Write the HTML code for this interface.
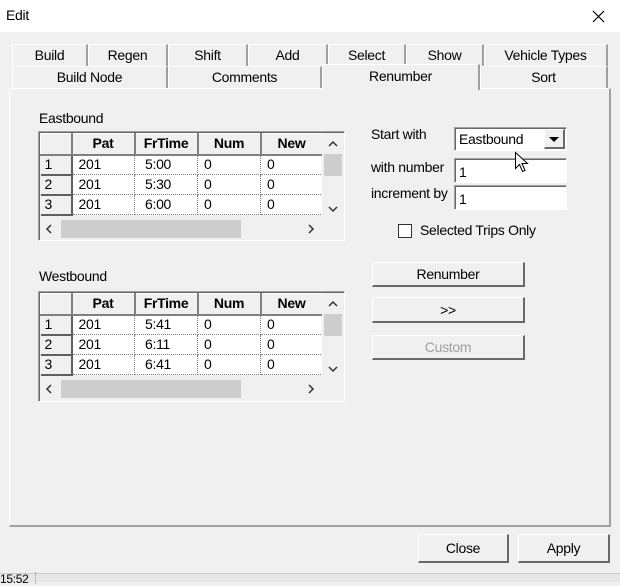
<!DOCTYPE html>
<html><head><style>
*{box-sizing:border-box;margin:0;padding:0}
body{width:620px;height:582px;background:#f0f0f0;font-family:"Liberation Sans",sans-serif;font-size:13px;color:#000;position:relative;overflow:hidden;letter-spacing:-0.3px}
.a{position:absolute}
.title{left:0;top:0;width:620px;height:32px;background:#fff}
.tab{position:absolute;height:22px;border:1px solid #fff;border-right:2px solid #a0a0a0;border-bottom:none;background:#f0f0f0;text-align:center;line-height:21px;font-size:14px}
.panel{left:9px;top:88px;width:602px;height:439px;border:1px solid #fff;border-right:2px solid #a0a0a0;border-bottom:2px solid #a0a0a0}
.grid{position:absolute;border:1px solid #a0a0a0;border-right-color:#fff;border-bottom-color:#fff;background:#f0f0f0;box-shadow:inset 1px 1px 0 #696969}
.btn{position:absolute;border:1px solid #fff;border-right:2px solid #696969;border-bottom:2px solid #696969;background:#f0f0f0;text-align:center;font-size:14px}
.inp{position:absolute;background:#fff;border:1px solid #a0a0a0;border-right-color:#fff;border-bottom-color:#fff;box-shadow:inset 1px 1px 0 #696969;padding-left:4px;font-size:14px}
table{border-collapse:collapse;position:absolute;left:1px;top:1px}
td{height:20px;font-size:14px;padding-left:6px;border-right:1px dotted #808080;border-bottom:1px dotted #808080;background:#fff;line-height:17px}
th{height:21px;font-size:14px;font-weight:bold;background:#f0f0f0;border-right:2px solid #808080;border-bottom:2px solid #808080;border-left:1px solid #fff;border-top:1px solid #fff;line-height:17px}
td.r{background:#f0f0f0;border:none;border-right:2px solid #606060;border-bottom:2px solid #606060;border-top:1px solid #fff;padding-left:4px}
</style></head><body>
<div class="a title"></div>
<div class="a" style="left:6px;top:7px;font-size:14px">Edit</div>
<svg class="a" style="left:592px;top:10px" width="13" height="13"><path d="M1 1L12 12M12 1L1 12" stroke="#000" stroke-width="1.2"/></svg>

<div class="tab" style="left:12px;top:44px;width:76px">Build</div>
<div class="tab" style="left:88px;top:44px;width:80px">Regen</div>
<div class="tab" style="left:168px;top:44px;width:80px">Shift</div>
<div class="tab" style="left:248px;top:44px;width:80px">Add</div>
<div class="tab" style="left:328px;top:44px;width:78px">Select</div>
<div class="tab" style="left:406px;top:44px;width:78px">Show</div>
<div class="tab" style="left:484px;top:44px;width:124px">Vehicle Types</div>
<div class="a panel"></div>
<div class="tab" style="left:12px;top:66px;width:156px">Build Node</div>
<div class="tab" style="left:168px;top:66px;width:154px">Comments</div>
<div class="tab" style="left:322px;top:64px;width:158px;height:26px;line-height:22px;border-right:2px solid #a0a0a0;z-index:2">Renumber</div>
<div class="tab" style="left:480px;top:66px;width:128px">Sort</div>

<div class="a" style="left:39px;top:110px;font-size:14px">Eastbound</div>
<div class="grid" style="left:38px;top:131px;width:307px;height:110px">
<table>
<tr><th style="width:31px"></th><th style="width:63px">Pat</th><th style="width:63px">FrTime</th><th style="width:63px">Num</th><th style="width:62px">New</th></tr>
<tr><td class="r">1</td><td>201</td><td style="padding-left:10px">5:00</td><td>0</td><td>0</td></tr>
<tr><td class="r">2</td><td>201</td><td style="padding-left:10px">5:30</td><td>0</td><td>0</td></tr>
<tr><td class="r">3</td><td>201</td><td style="padding-left:10px">6:00</td><td>0</td><td>0</td></tr>
</table>
<div class="a" style="left:283px;top:1px;width:22px;height:84px;background:#f0f0f0"></div>
<div class="a" style="left:285px;top:22px;width:18px;height:22px;background:#cdcdcd"></div>
<svg class="a" style="left:289px;top:8px" width="10" height="8"><path d="M1 6L5 2L9 6" fill="none" stroke="#333" stroke-width="1.5"/></svg>
<svg class="a" style="left:289px;top:73px" width="10" height="8"><path d="M1 2L5 6L9 2" fill="none" stroke="#333" stroke-width="1.5"/></svg>
<div class="a" style="left:1px;top:86px;width:283px;height:21px;background:#f0f0f0"></div>
<div class="a" style="left:22px;top:88px;width:180px;height:18px;background:#cdcdcd"></div>
<svg class="a" style="left:6px;top:92px" width="8" height="10"><path d="M6 1L2 5L6 9" fill="none" stroke="#333" stroke-width="1.5"/></svg>
<svg class="a" style="left:268px;top:92px" width="8" height="10"><path d="M2 1L6 5L2 9" fill="none" stroke="#333" stroke-width="1.5"/></svg>
</div>

<div class="a" style="left:39px;top:268px;font-size:14px">Westbound</div>
<div class="grid" style="left:38px;top:291px;width:307px;height:111px">
<table>
<tr><th style="width:31px"></th><th style="width:63px">Pat</th><th style="width:63px">FrTime</th><th style="width:63px">Num</th><th style="width:62px">New</th></tr>
<tr><td class="r">1</td><td>201</td><td style="padding-left:10px">5:41</td><td>0</td><td>0</td></tr>
<tr><td class="r">2</td><td>201</td><td style="padding-left:10px">6:11</td><td>0</td><td>0</td></tr>
<tr><td class="r">3</td><td>201</td><td style="padding-left:10px">6:41</td><td>0</td><td>0</td></tr>
</table>
<div class="a" style="left:283px;top:1px;width:22px;height:84px;background:#f0f0f0"></div>
<div class="a" style="left:285px;top:22px;width:18px;height:22px;background:#cdcdcd"></div>
<svg class="a" style="left:289px;top:8px" width="10" height="8"><path d="M1 6L5 2L9 6" fill="none" stroke="#333" stroke-width="1.5"/></svg>
<svg class="a" style="left:289px;top:73px" width="10" height="8"><path d="M1 2L5 6L9 2" fill="none" stroke="#333" stroke-width="1.5"/></svg>
<div class="a" style="left:1px;top:86px;width:283px;height:21px;background:#f0f0f0"></div>
<div class="a" style="left:22px;top:88px;width:180px;height:18px;background:#cdcdcd"></div>
<svg class="a" style="left:6px;top:92px" width="8" height="10"><path d="M6 1L2 5L6 9" fill="none" stroke="#333" stroke-width="1.5"/></svg>
<svg class="a" style="left:268px;top:92px" width="8" height="10"><path d="M2 1L6 5L2 9" fill="none" stroke="#333" stroke-width="1.5"/></svg>
</div>

<div class="a" style="left:371px;top:126px;font-size:14px">Start with</div>
<div class="inp" style="left:454px;top:127px;width:113px;height:24px;line-height:22px">Eastbound</div>
<div class="btn" style="left:544px;top:129px;width:21px;height:20px;border-color:#fff #696969 #696969 #fff"><svg width="10" height="6" style="margin-top:6px"><path d="M0 0H10L5 5Z"/></svg></div>
<svg class="a" style="left:514px;top:151px;z-index:3" width="16" height="24"><path d="M1.5 1.5V17.5L5.5 13.5L8.5 20.5L11 19.5L8 12.5H13.5Z" fill="#fff" stroke="#000"/></svg>
<div class="a" style="left:371px;top:159px;font-size:14px">with number</div>
<div class="inp" style="left:454px;top:158px;width:113px;height:25px;line-height:27px">1</div>
<div class="a" style="left:371px;top:185px;font-size:14px">increment by</div>
<div class="inp" style="left:454px;top:185px;width:113px;height:25px;line-height:27px">1</div>
<div class="a" style="left:398px;top:224px;width:14px;height:14px;background:#fff;border:1px solid #333"></div>
<div class="a" style="left:420px;top:222px;font-size:14px">Selected Trips Only</div>
<div class="btn" style="left:372px;top:262px;width:153px;height:25px;line-height:22px">Renumber</div>
<div class="btn" style="left:372px;top:297px;width:153px;height:26px;line-height:24px">&gt;&gt;</div>
<div class="btn" style="left:372px;top:335px;width:153px;height:25px;line-height:23px;color:#a0a0a0">Custom</div>

<div class="btn" style="left:418px;top:534px;width:91px;height:29px;line-height:26px">Close</div>
<div class="btn" style="left:518px;top:534px;width:92px;height:29px;line-height:26px">Apply</div>
<div class="a" style="left:0;top:573px;width:620px;height:9px;background:#e6e6e6;border-top:1px solid #ccc"></div>
<div class="a" style="left:0;top:572px;width:36px;height:12px;border-right:1px dotted #999;font-size:12px;line-height:14px">15:52</div>
</body></html>
